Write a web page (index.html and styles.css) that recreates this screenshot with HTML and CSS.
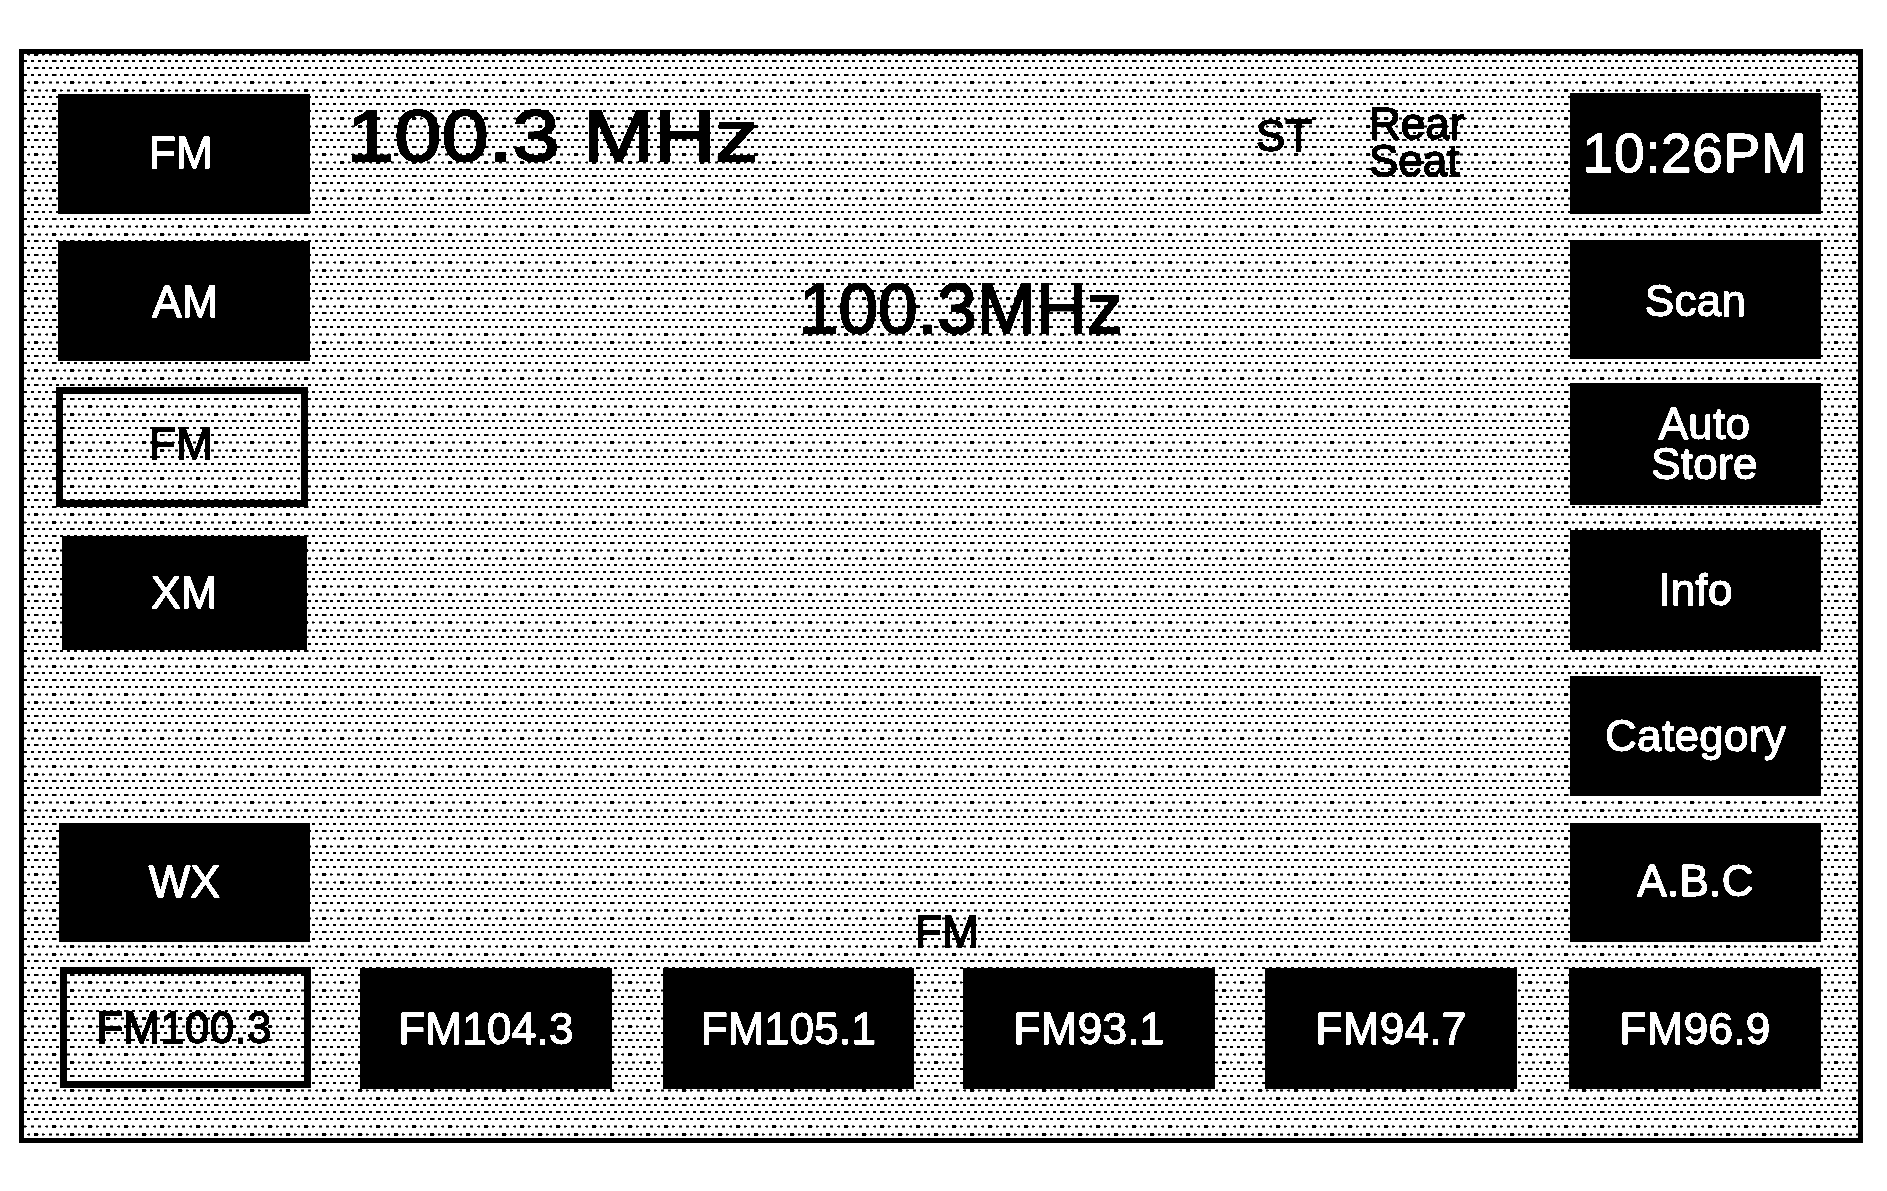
FILE: index.html
```html
<!DOCTYPE html>
<html lang="en">
<head>
    <meta charset="UTF-8">
    <meta name="viewport" content="width=device-width, initial-scale=1.0">
    <title>Radio Display</title>
    <link rel="stylesheet" href="styles.css">
</head>
<body>
    <div class="screen">
        <div class="main-area">
            <div class="side-col left-col">
                <button class="key key-fm-top">FM</button>
                <button class="key key-am">AM</button>
                <button class="key outlined key-fm-sel">FM</button>
                <button class="key key-xm">XM</button>
                <button class="key key-wx">WX</button>
            </div>
            <div class="center-col">
                <div class="status-row">
                    <div class="freq-big">100.3 MHz</div>
                    <div class="stereo">ST</div>
                    <div class="rear-seat">Rear<br>Seat</div>
                </div>
                <div class="freq-mid">100.3MHz</div>
                <div class="band-label">FM</div>
            </div>
            <div class="side-col right-col">
                <button class="key key-clock">10:26PM</button>
                <button class="key key-scan">Scan</button>
                <button class="key key-auto">Auto<br>Store</button>
                <button class="key key-info">Info</button>
                <button class="key key-cat">Category</button>
                <button class="key key-abc">A.B.C</button>
            </div>
        </div>
        <div class="preset-row">
            <button class="key outlined preset-1">FM100.3</button>
            <button class="key preset-2">FM104.3</button>
            <button class="key preset-3">FM105.1</button>
            <button class="key preset-4">FM93.1</button>
            <button class="key preset-5">FM94.7</button>
            <button class="key preset-6">FM96.9</button>
        </div>
    </div>
</body>
</html>
```

FILE: styles.css
```css
* { margin: 0; padding: 0; box-sizing: border-box; }
html, body { background: #fff; }
/* the original is pure black and white, the contrast filter removes the grey edges */
body { font-family: 'Liberation Sans', Arial, sans-serif; height: 1191px; padding: 49px 0 0 19px; overflow: hidden; filter: contrast(12); }

.screen {
    width: 1844px; height: 1094px; border: 5px solid #000; padding: 40px 37px 0 34px;
    background-color: #fff;
    background-image: url("data:image/svg+xml,<svg xmlns='http://www.w3.org/2000/svg' width='36' height='72'><g fill='none' stroke='black' stroke-width='2' stroke-dasharray='3.2 4'><path d='M-0.4 1H36M-0.4 15H36M-0.4 30.5H36M-0.4 44H36M-0.4 58.5H36'/><path d='M3.2 8H36M3.2 22.5H36M3.2 37H36M3.2 51H36M3.2 66.5H36'/></g><g fill='black'><rect x='28' y='0' width='4.5' height='2'/><rect x='10' y='7' width='4.5' height='2'/><rect x='28' y='14' width='4.5' height='2'/><rect x='10' y='21.5' width='4.5' height='2'/><rect x='28' y='29.5' width='4.5' height='2'/><rect x='10' y='36' width='4.5' height='2'/><rect x='28' y='43' width='4.5' height='2'/><rect x='10' y='50' width='4.5' height='2'/><rect x='28' y='57.5' width='4.5' height='2'/><rect x='10' y='65.5' width='4.5' height='2'/></g></svg>");
    background-size: 36px 72px;
    background-position: 0 6px;
}

.main-area { display: flex; height: 849px; }
.side-col { width: 252px; flex-shrink: 0; display: flex; flex-direction: column; }
.center-col { flex: 1; display: flex; flex-direction: column; }

.key { display: flex; align-items: center; justify-content: center; background: #000; color: #fff; border: none; font-family: inherit; font-size: 44px; letter-spacing: 0.3px; line-height: 40px; height: 120px; width: 100%; text-align: center; -webkit-text-stroke: 1.2px #fff; }
.key.outlined { background: transparent; color: #000; border: 7px solid #000; -webkit-text-stroke: 1.5px #000; }

/* left column, the boxes are not quite aligned on the original */
.key-fm-top { margin-bottom: 27px; padding: 0 6px 2px 0; }
.key-am { margin-bottom: 26px; padding: 2px 0 0 3px; }
.key-fm-sel { margin-left: -2px; margin-bottom: 29px; padding: 0 2px 6px 0; }
.key-xm { margin-left: 4px; width: 245px; height: 114px; margin-bottom: 173px; }
.key-wx { margin-left: 1px; width: 251px; height: 119px; padding-bottom: 2px; }

.right-col { margin-top: -1px; padding-left: 1px; }
.key-clock { height: 121px; margin-bottom: 26px; font-size: 55px; letter-spacing: 0.6px; padding: 0 1px 2px 0; }
.key-scan { height: 119px; margin-bottom: 24px; padding-top: 3px; }
.key-auto { height: 122px; margin-bottom: 25px; padding-left: 18px; }
.key-info { margin-bottom: 26px; }
.key-cat { margin-bottom: 27px; }
.key-abc { height: 119px; padding-bottom: 3px; }

.status-row { display: flex; align-items: flex-start; padding-left: 37px; height: 100px; }
/* the top frequency has the same height as the middle one but is drawn wider */
.freq-big { font-size: 72px; line-height: 92px; margin-top: -4px; height: 92px; width: 909px; transform: scaleX(1.18); transform-origin: left; -webkit-text-stroke: 2px #000; }
.stereo { font-size: 44px; line-height: 48px; margin-top: 18px; width: 113px; -webkit-text-stroke: 1.5px #000; }
.rear-seat { font-size: 44px; line-height: 37px; margin-top: 11px; -webkit-text-stroke: 1.5px #000; }
.freq-mid { font-size: 71px; line-height: 80px; margin-top: 75px; padding-left: 489px; -webkit-text-stroke: 2px #000; }
.band-label { font-size: 44px; line-height: 40px; margin-top: auto; margin-bottom: -9px; padding-left: 605px; -webkit-text-stroke: 1.5px #000; }

.preset-row { display: flex; margin-top: 25px; }
.preset-row .key { height: 121px; width: 252px; flex-shrink: 0; }
.key.preset-1 { margin: -1px 49px 0 2px; width: 251px; padding-right: 3px; }
.preset-2 { margin-right: 51px; }
.key.preset-3 { margin-right: 49px; width: 251px; }
.preset-4 { margin-right: 50px; }
.preset-5 { margin-right: 52px; }
```
